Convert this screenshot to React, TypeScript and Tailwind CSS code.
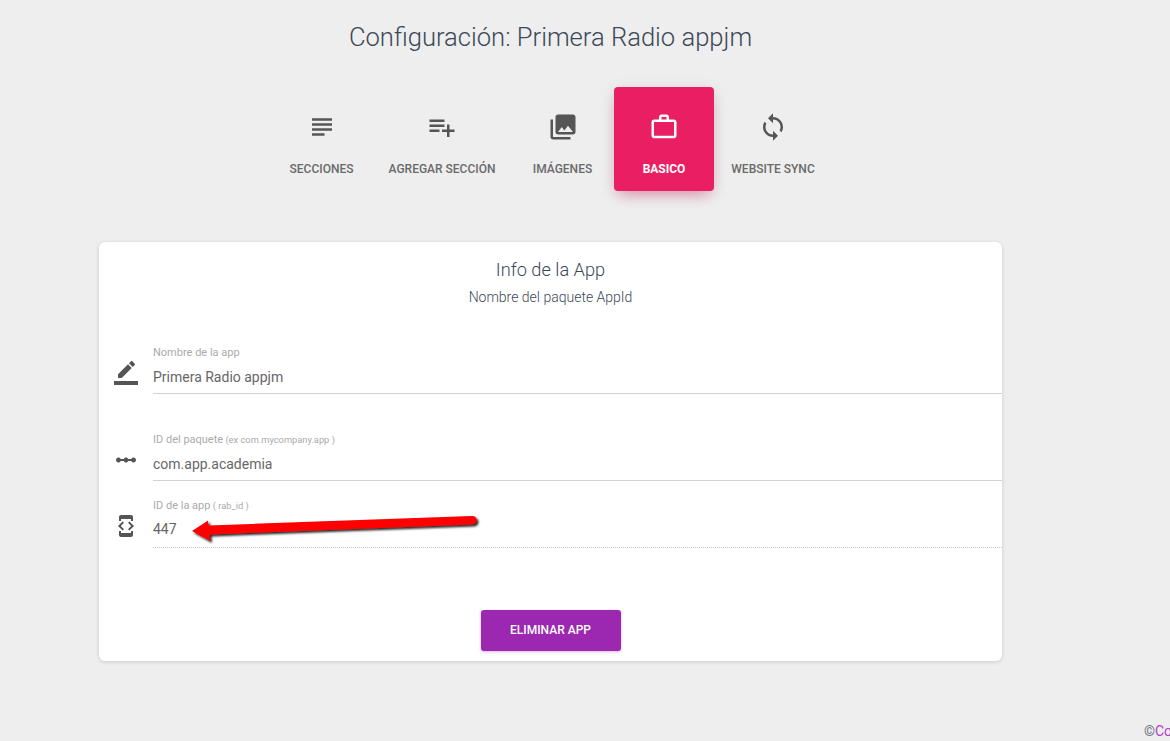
const ICONS: Record<string, string> = {
  subject: "M14 17H4v2h10v-2zm6-8H4v2h16V9zM4 15h16v-2H4v2zM4 5v2h16V5H4z",
  add: "M14 10H2v2h12v-2zm0-4H2v2h12V6zm4 8v-4h-2v4h-4v2h4v4h2v-4h4v-2h-4zM2 16h8v-2H2v2z",
  photo: "M22 16V4c0-1.1-.9-2-2-2H8c-1.1 0-2 .9-2 2v12c0 1.1.9 2 2 2h12c1.1 0 2-.9 2-2zm-11-4l2.03 2.71L16 11l4 5H8l3-4zM2 6v14c0 1.1.9 2 2 2h14v-2H4V6H2z",
  work: "M14 6V4h-4v2h4zM4 8v11h16V8H4zm16-2c1.11 0 2 .89 2 2v11c0 1.11-.89 2-2 2H4c-1.11 0-2-.89-2-2l.01-11c0-1.11.88-2 1.99-2h4V4c0-1.11.89-2 2-2h4c1.11 0 2 .89 2 2v2h4z",
  sync: "M12 4V1L8 5l4 4V6c3.31 0 6 2.69 6 6 0 1.01-.25 1.97-.7 2.8l1.46 1.46C19.54 15.03 20 13.57 20 12c0-4.42-3.58-8-8-8zm0 14c-3.31 0-6-2.69-6-6 0-1.01.25-1.97.7-2.8L5.24 7.74C4.46 8.97 4 10.43 4 12c0 4.42 3.58 8 8 8v3l4-4-4-4v3z",
  border: "M17.75 7L14 3.25l-10 10V17h3.75l10-10zm2.96-2.96c.39-.39.39-1.02 0-1.41L18.37.29c-.39-.39-1.02-.39-1.41 0L15 2.25 18.75 6l1.96-1.96zM0 20h24v4H0z",
  scale: "M19.5 9.5c-1.03 0-1.9.62-2.29 1.5h-2.92c-.39-.88-1.26-1.5-2.29-1.5s-1.9.62-2.29 1.5H6.79c-.39-.88-1.26-1.5-2.29-1.5C3.12 9.5 2 10.62 2 12s1.12 2.5 2.5 2.5c1.03 0 1.9-.62 2.29-1.5h2.92c.39.88 1.26 1.5 2.29 1.5s1.9-.62 2.29-1.5h2.92c.39.88 1.26 1.5 2.29 1.5 1.38 0 2.5-1.12 2.5-2.5s-1.12-2.5-2.5-2.5z",
  dev: "M7 5h10v2h2V3c0-1.1-.9-1.99-2-1.99L7 1c-1.1 0-2 .9-2 2v4h2V5zm8.41 11.59L20 12l-4.59-4.59L14 8.83 17.17 12 14 15.17l1.41 1.42zM10 15.17L6.83 12 10 8.83 8.59 7.41 4 12l4.59 4.59L10 15.17zM17 19H7v-2H5v4c0 1.1.9 2 2 2h10c1.1 0 2-.9 2-2v-4h-2v2z",
};

function Icon({ name, className }: { name: string; className: string }) {
  return (
    <svg viewBox="0 0 24 24" className={className} fill="currentColor">
      <path d={ICONS[name]} />
    </svg>
  );
}

function Tab({ icon, label, active, width }: { icon: string; label: string; active?: boolean; width: string }) {
  return (
    <div
      className={`flex h-[104px] flex-col items-center rounded-[4px] pt-[25px] ${width} ${
        active ? "bg-[#e91e63] text-white shadow-[0_8px_14px_-6px_rgba(233,30,99,0.45),0_3px_16px_0_rgba(0,0,0,0.10)]" : "text-[#555555]"
      }`}
    >
      <Icon name={icon} className="h-[30px] w-[30px]" />
      <span className={`mt-[18px] whitespace-nowrap text-[12px] leading-[18px] ${active ? "font-bold" : "font-medium text-[#6a6a6a]"}`}>{label}</span>
    </div>
  );
}

function Field({
  icon,
  iconClass,
  label,
  hint,
  value,
  rowClass,
  valueClass,
}: {
  icon: string;
  iconClass: string;
  label: string;
  hint?: string;
  value: string;
  rowClass: string;
  valueClass: string;
}) {
  return (
    <div className={`flex ${rowClass}`}>
      <div className="flex w-[54px] shrink-0 justify-center">
        <Icon name={icon} className={iconClass} />
      </div>
      <div className="min-w-0 flex-1">
        <div className="h-[13px] text-[11px] leading-[13px] text-[#aaaaaa]">
          {label}
          {hint && <span className="text-[9.3px]"> {hint}</span>}
        </div>
        <div className={`text-[14px] leading-[18px] text-[#666666] ${valueClass}`}>{value}</div>
      </div>
    </div>
  );
}

export default function App() {
  return (
    <div className="relative h-[741px] w-[1170px] overflow-hidden bg-[#eeeeee] font-['Roboto',sans-serif]">
      <div className="ml-[99px] w-[903px]">
        <h1 className="pt-[20px] text-center text-[25.6px] font-light leading-[34px] text-[#3c4858]">
          Configuración: Primera Radio appjm
        </h1>
        <div className="mt-[33px] flex justify-center pl-[3px]">
          <Tab icon="subject" label="SECCIONES" width="w-[99px]" />
          <Tab icon="add" label="AGREGAR SECCIÓN" width="w-[142px]" />
          <Tab icon="photo" label="IMÁGENES" width="w-[101px] pr-[2px]" />
          <Tab icon="work" label="BASICO" active width="w-[100px]" />
          <Tab icon="sync" label="WEBSITE SYNC" width="w-[118px]" />
        </div>
        <div className="mt-[51px] h-[419px] rounded-[6px] bg-white pt-[16px] shadow-[0_1px_4px_0_rgba(0,0,0,0.14)]">
          <h4 className="text-center text-[18.2px] font-light leading-[24px] text-[#3c4858]">Info de la App</h4>
          <p className="mt-[5px] text-center text-[14px] font-light leading-[20px] text-[#3c4858]">Nombre del paquete AppId</p>
          <Field
            icon="border"
            iconClass="mt-[15px] h-[24px] w-[24px] text-[#555555] ml-[-1px]"
            label="Nombre de la app"
            value="Primera Radio appjm"
            rowClass="mt-[39px]"
            valueClass="mt-[9px] h-[26px] border-b border-[#d2d2d2]"
          />
          <Field
            icon="scale"
            iconClass="mt-[15px] h-[24px] w-[24px] text-[#555555] ml-[-1px]"
            label="ID del paquete"
            hint="(ex com.mycompany.app )"
            value="com.app.academia"
            rowClass="mt-[39px]"
            valueClass="mt-[9px] h-[26px] border-b border-[#d2d2d2]"
          />
          <Field
            icon="dev"
            iconClass="mt-[15px] h-[24px] w-[24px] text-[#555555] ml-[-1px]"
            label="ID de la app"
            hint="( rab_id )"
            value="447"
            rowClass="mt-[18px]"
            valueClass="mt-[8px] h-[28px] border-b border-dotted border-[#c4c4c4]"
          />
          <div className="mt-[62px] flex justify-center">
            <button className="h-[41px] w-[140px] rounded-[3px] bg-[#9c27b0] pb-[2px] text-[12px] font-medium text-white shadow-[0_1px_3px_rgba(156,39,176,0.35)]">
              ELIMINAR APP
            </button>
          </div>
        </div>
      </div>
      <svg className="absolute left-[180px] top-[505px]" width="310" height="50" viewBox="180 505 310 50">
        <defs>
          <filter id="arrowShadow" x="-5%" y="-40%" width="110%" height="180%">
            <feDropShadow dx="2" dy="2" stdDeviation="1.2" floodColor="#000" floodOpacity="0.85" />
          </filter>
        </defs>
        <path
          d="M192 531 L208 520.5 L208.5 525.5 L472 516 Q476.5 516 476.5 520 Q476.5 524 472 524.5 L209.5 534.5 L210 541 Z"
          fill="#ff0000"
          filter="url(#arrowShadow)"
        />
      </svg>
      <div className="absolute left-[1144px] top-[723px] whitespace-nowrap text-[14px] leading-[16px] text-[#6b7280]">
        ©<span className="text-[#b43fc8]">Copyright</span>
      </div>
    </div>
  );
}
